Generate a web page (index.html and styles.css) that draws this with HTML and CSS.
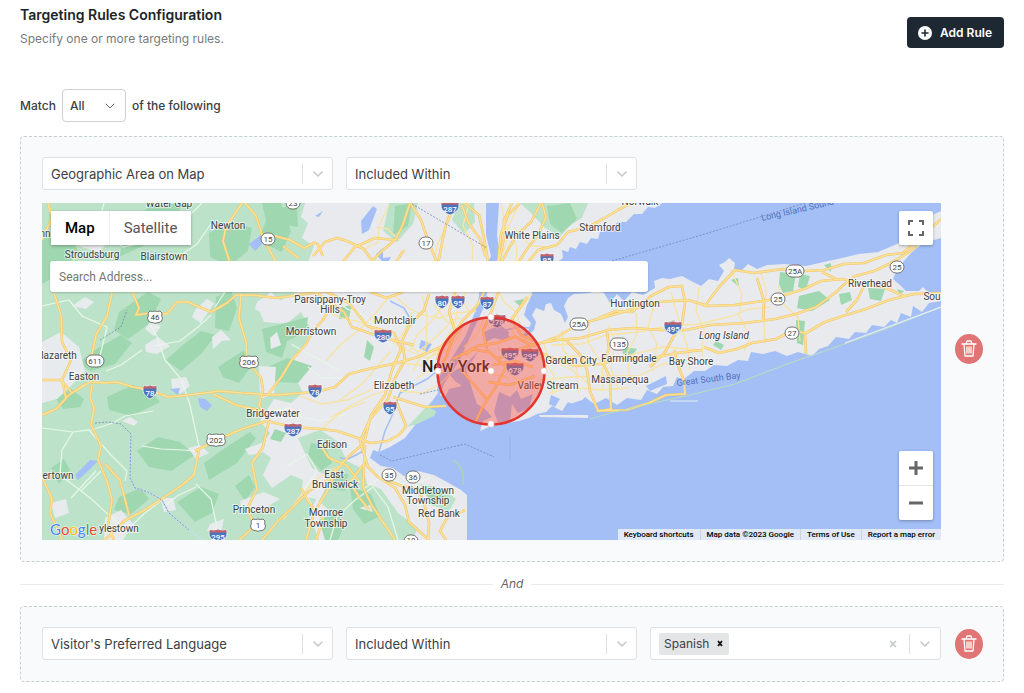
FILE: index.html
```
<!DOCTYPE html>
<html lang="en">
<head>
    <meta charset="UTF-8">
    <meta name="viewport" content="width=device-width, initial-scale=1.0">
    <title>Targeting Rules Configuration</title>
    <link rel="stylesheet" href="styles.css">
</head>
<body>

    <main class="page">
        <header class="header">
            <div>
                <h1>Targeting Rules Configuration</h1>
                <p class="subtitle">Specify one or more targeting rules.</p>
            </div>
            <button type="button" class="add-rule">
                <svg width="14" height="14" viewBox="0 0 14 14"><circle cx="7" cy="7" r="7" fill="#fff"/><path d="M7 4v6M4 7h6" stroke="#1e2832" stroke-width="1.6" stroke-linecap="round"/></svg>
                Add Rule
            </button>
        </header>

        <div class="match">
            <label for="matchType">Match</label>
            <div class="select select-small">
                <select id="matchType">
                    <option>All</option>
                    <option>Any</option>
                </select>
                <svg class="chevron" width="10" height="6" viewBox="0 0 10 6"><path d="M1 1l4 4 4-4"/></svg>
            </div>
            <span>of the following</span>
        </div>

        <!-- Rule 1: map area -->
        <section class="rule">
            <div class="rule-fields">
                <div class="select">
                    <select aria-label="Rule type">
                        <option>Geographic Area on Map</option>
                    </select>
                    <span class="arrow"><svg class="chevron" width="12" height="8" viewBox="0 0 12 8"><path d="M2 2l4 4 4-4"/></svg></span>
                </div>
                <div class="select">
                    <select aria-label="Condition">
                        <option>Included Within</option>
                    </select>
                    <span class="arrow"><svg class="chevron" width="12" height="8" viewBox="0 0 12 8"><path d="M2 2l4 4 4-4"/></svg></span>
                </div>

                <div class="map">
                    <svg class="map-canvas" viewBox="42 203 899 337" preserveAspectRatio="xMidYMid slice" role="img" aria-label="Map of New York and Long Island">
                        <defs>
                            <g id="interstate">
                                <path d="M-6-6q3 1 6-.5q3 1.500 6 .5c2.500 5 0 10-6 13c-6-3-8.500-8-6-13z" fill="#4c74bd" stroke="#fff" stroke-width=".7"/>
                                <path d="M-6-6q3 1 6-.5q3 1.500 6 .5l.8 2.600h-13.600z" fill="#c4616b"/>
                            </g>
                            <g id="interstate-wide">
                                <path d="M-8-6q4 1 8-.5q4 1.500 8 .5c2.500 5 0 10-8 13c-8-3-10.500-8-8-13z" fill="#4c74bd" stroke="#fff" stroke-width=".7"/>
                                <path d="M-8-6q4 1 8-.5q4 1.500 8 .5l.8 2.600h-17.600z" fill="#c4616b"/>
                            </g>
                            <rect id="route" x="-7" y="-6" width="14" height="12" rx="6" fill="#fff" stroke="#666" stroke-width=".9"/>
                            <rect id="route-wide" x="-9" y="-6" width="18" height="12" rx="6" fill="#fff" stroke="#666" stroke-width=".9"/>
                            <path id="us" d="M-5-6q2.500 1 5 0q2.500 1 5 0l2 2q-1 3 .5 5q0 4-3.500 4.500q-3 0-4 1q-1-1-4-1q-3.500-.5-3.500-4.500q1.500-2 .5-5z" fill="#fff" stroke="#666" stroke-width=".9"/>
                            <path id="us-wide" d="M-7-6q3.500 1 7 0q3.500 1 7 0l2 2q-1 3 .5 5q0 4-3.500 4.500q-5 0-6 1q-1-1-6-1q-3.500-.5-3.500-4.500q1.500-2 .5-5z" fill="#fff" stroke="#666" stroke-width=".9"/>

                            <path id="roads-west" d="M42 380L61 380L72 393L90 382L105 383L117 382L133 387L150 390L168 397L189 395L220 391L242 393L276 395L316 392L335 387L349 374L368 369L393 364L418 357L445 345L461 328
                                M54 293L61 315L62 342L71 360L62 380L66 398M92 385L90 398L94 408L91 425L101 446L98 460L107 481L112 500L108 526L114 540M132 291L139 308L136 315L151 313L167 314L177 302L188 302L211 312L227 303L236 295L253 295L276 298L305 294L329 291
                                M42 415L56 409L69 395L85 384M241 294L239 318L246 342L247 361L261 378L263 390L259 405L269 420L263 447L252 463L257 489L247 509L255 526L239 540M199 450L194 475L182 485L163 498L143 511L124 521L105 540M195 451L219 439L242 429L267 421L292 427L321 429L337 431L355 437L370 443L388 441
                                M42 477L52 499L50 513L62 540M105 464L120 480L129 515M112 293L107 316L96 335L91 359M213 394L236 405L262 411M242 203L226 227L223 241L230 263M245 203L256 216L263 238L276 262M42 240L52 218L48 203"/>
                            <path id="roads-jersey" d="M316 242L304 248L290 240L275 236M313 256L325 242L337 238L347 241L364 249L373 262M313 291L330 302L344 312L352 327L372 334L396 341L414 345M331 307L322 321L313 331L306 344L291 361L282 376L267 396M367 266L382 251L396 239L403 224L410 203M411 204L421 220L428 240L437 263M438 264L443 238L446 225L455 203
                                M327 292L349 303L367 326L394 333L401 349L392 370L385 395L371 415L364 443L348 457L329 479L309 491L292 508L279 520L262 540M429 294L424 310L409 326L402 341L405 360L395 378L388 399L370 419L360 441L368 467L378 477L395 488L405 505L409 522L429 540
                                M365 445L363 487L371 504L387 528L395 540M364 464L350 482L359 497L369 510M317 440L329 458L346 465L359 481M335 469L330 486L314 513L306 540M316 540L323 519L309 503L301 488M383 479L402 486L419 490L425 507L429 523L428 540M388 441L400 434L406 426L396 401M393 397L425 407L446 406
                                M323 256L317 243M340 265L355 247L375 238L395 240M298 258L283 246M455 292L449 312L455 331L441 347L437 360M370 292L387 298L403 292M396 262L404 250M465 510L447 518L440 531L446 540"/>
                            <path id="roads-city" d="M462 205L468 222L480 239L486 257M464 203L479 215L484 238L488 262M485 290L477 306L463 320L454 334L447 355L441 366M499 262L504 238L504 220L512 203M501 263L509 248L516 236L531 222L541 203M542 203L546 217L538 235L527 249L518 263M528 262L538 250L557 245L568 232L588 227L603 219L618 210L631 203
                                M520 203L508 215L501 234L498 262M499 290L492 310L483 331L487 350L506 367L495 388L482 408L476 421M527 297L512 319L521 335L534 341M492 365L515 361L533 367M488 382L510 385L535 376M465 355L477 346L497 343L514 337M487 352L472 349L453 359M488 401L472 382L462 371"/>
                            <path id="roads-island" d="M497 359L514 351L535 344L558 340L581 338L608 330L633 328L661 330L686 330L710 325L745 323L775 319L796 314L816 307L835 293L850 279M514 336L533 346L557 337L579 324L602 318L633 309L658 302L688 300L708 306L735 305L769 300L785 295L804 289L821 281L843 279L867 285L884 287L906 297
                                M599 318L616 311L632 312L651 296L669 287L682 286L685 303L682 324L675 334L665 352L650 367M704 307L719 287L735 270L754 273L783 269L805 271L824 270L844 264L864 263L886 255L903 253L914 243L925 234L941 219M822 272L836 279M852 277L874 271L889 264L906 254L917 246M846 312L857 300L864 286M757 278L764 301L763 321M704 347L719 353L737 349L752 343L776 339L792 331L806 333L825 322L846 315L866 309L889 300L914 294L941 293
                                M540 353L558 360L575 366L599 364L622 359L652 358L677 353L702 350M566 340L581 356L587 370L590 391L598 411L612 409M607 332L609 349L603 363L610 378L611 409M597 411L626 410L649 403L666 395L685 394L684 381L678 365L674 350M805 333L806 354"/>
                        </defs>

                        <!-- water -->
                        <rect x="42" y="203" width="899" height="337" fill="#a3bff5"/>

                        <!-- land -->
                        <g fill="#e8eaee">
                            <path d="M42 203H662L655 208L648 207L642 214L634 214L626 222L618 222L611 228L600 232L598 239L591 238L587 244L580 242L576 249L570 247L568 252L562 250L563 258L556 263L548 272L540 284L533 289L530 299L527 305L524 315L531 323L528 331L520 337L505 342L490 343L478 352L463 366L449 374L455 381L462 386L449 389L445 397L437 403L430 409L418 421L405 438L390 447L379 452L373 450L370 458L381 466L393 468L404 476L418 471L434 475L447 482L461 490L467 495L467 540H42z"/>
                            <path d="M466 370L478 352L496 338L514 330L526 337L534 330L536 322L532 315L536 308L544 311L546 304L551 303L554 310L561 314L565 323L568 317L564 306L568 298L574 294L590 293L599 288L604 293L610 303L617 294L624 301L632 292L643 295L655 288L654 281L662 278L670 279L682 276L693 282L701 286L709 279L718 281L724 271L719 265L725 262L729 258L735 263L734 269L741 271L748 264L757 269L767 265L785 264L806 266L824 262L842 258L859 254L878 252L890 247L906 240L920 230L930 216L941 211L941 238L931 241L921 245L912 252L904 261L897 270L893 279L900 285L906 291L919 291L923 287L929 293L941 293L941 301L929 303L922 312L913 306L911 317L901 313L897 323L891 320L884 327L872 325L866 333L855 332L849 339L836 337L828 346L819 349L812 356L798 352L787 356L775 351L763 354L751 352L748 361L738 360L727 366L714 365L705 371L694 371L684 379L677 377L673 386L663 387L657 394L647 390L641 400L627 398L617 405L606 398L594 404L585 397L577 406L568 402L562 411L552 406L546 412L537 414L529 418L519 421L507 423L491 426L480 431L483 421L492 417L485 409L477 404L473 392z"/>
                            <path d="M539 415L550 415L588 415L588 418L540 417z"/>
                        </g>

                        <!-- light green country -->
                        <g fill="#bce3c9">
                            <path d="M42 203H305L301 217L308 223L302 238L314 246L308 262L292 270L299 291L281 300L270 296L258 308L264 322L286 324L301 312L311 329L304 347L292 358L284 373L296 379L303 393L291 403L274 399L260 421L270 433L259 449L271 458L263 475L272 488L291 475L303 480L301 496L316 499L309 515L319 540H42z"/>
                            <path d="M298 438L320 430L337 441L347 461L363 469L367 484L381 489L398 513L418 528L412 540H327L336 517L319 501L331 478L312 468z"/>
                            <path d="M389 203H418L413 224L397 242L383 231zM520 203H588L582 218L569 226L560 237L545 228L532 214zM459 203L474 203L475 222L464 234L452 220z"/>
                            <path d="M407 427L431 402L445 393L434 416L417 424zM420 484L442 488L456 499L449 511L431 505z"/>
                        </g>

                        <!-- forests and parks -->
                        <g fill="#9fd7b0">
                            <path d="M42 239L57 228L69 235L78 251L62 273L42 284zM127 227L150 206L184 203L169 225L145 245L119 257zM209 233L231 221L252 228L248 251L229 266L210 257zM262 203L281 203L291 231L282 252L258 241L266 221zM282 208L297 203L298 227L286 225z"/>
                            <path d="M119 312L148 292L161 299L149 324L128 339L114 330zM98 348L121 335L132 343L115 364L91 371L78 363zM166 360L183 345L201 331L216 335L201 354L181 371zM216 297L231 290L237 308L229 331L215 328zM218 367L243 351L255 361L239 383L223 377z"/>
                            <path d="M56 399L71 389L84 399L80 407L63 409zM107 397L133 385L151 391L160 402L132 416L109 410zM137 451L158 437L180 442L195 455L171 471L149 467zM204 463L228 446L250 432L256 438L237 463L209 480zM177 502L201 487L219 494L212 513L195 522zM51 468L64 459L70 470L59 484zM119 497L141 488L149 499L131 514L114 510zM235 486L249 475L255 487L245 501z"/>
                            <path d="M262 329L285 323L308 317L306 332L287 341L282 358L266 352zM263 369L288 358L312 366L298 383L277 382zM395 206L412 203L408 226L393 235zM547 206L570 203L577 219L562 233L550 224zM367 340L374 347L370 361L364 357zM341 307L352 305L349 318L339 319z"/>
                            <path d="M311 443L325 445L332 463L321 471L308 455zM350 487L371 494L380 516L364 524L353 509zM319 520L337 511L344 526L338 540H325zM424 491L442 491L448 500L434 505zM335 475L348 474L345 491L332 489zM275 429L286 433L281 442L270 439z"/>
                            <path d="M780 272L796 274L793 291L783 293L779 284zM800 274L810 276L806 290L798 287zM799 296L819 291L830 300L812 311L797 308zM839 294L850 292L852 300L841 305zM868 288L885 289L881 301L870 299zM796 320L805 321L803 345L797 343zM824 265L831 263L831 272zM626 347L637 349L631 357L622 353zM664 323L675 320L673 334L666 330zM731 280L738 278L739 287zM716 341L724 345L721 350L713 345zM514 301L524 299L521 307zM897 289L904 291L900 295z"/>
                        </g>

                        <!-- towns over the green -->
                        <g fill="#e7ebee">
                            <path d="M42 342L61 332L79 347L85 371L71 386L57 399L42 403zM70 228L91 226L112 238L99 252L78 246zM85 297L94 302L86 309L72 306zM150 322L161 326L154 336L145 329zM145 345L158 337L170 346L157 354L146 352zM195 310L207 299L214 303L201 323L192 317zM212 337L221 330L231 340L222 341L213 349zM257 302L271 292L279 300L264 314L255 309z"/>
                            <path d="M122 421L130 417L138 422L134 426zM171 379L186 377L190 386L180 394L172 388zM188 448L200 445L209 453L196 459zM160 498L173 498L176 510L164 512zM51 503L66 499L69 513L55 518zM105 518L121 510L133 524L123 540H104zM210 524L224 519L221 532L207 531zM259 366L276 367L274 394L260 399zM245 449L264 442L262 453L249 455zM240 501L264 492L280 499L260 511L241 508z"/>
                            <path d="M270 338L277 332L281 345L271 349zM286 275L300 270L298 284L287 287zM359 508L370 505L373 512zM307 484L316 482L319 492L309 497z"/>
                        </g>

                        <!-- rivers and lakes -->
                        <g fill="#a3bff5">
                            <path d="M486 203H499L497 235L500 258L490 282L483 309L471 335L459 361L444 384L440 395L454 404L464 415L440 413L428 407L438 393L437 380L452 358L466 335L478 304L481 278L491 256L486 235z"/>
                            <path d="M361 221L373 206L377 209L369 230L362 234zM315 216L323 211L319 217zM249 244L261 235L265 241L255 251zM198 398L205 399L212 405L207 411L200 407zM75 475L90 460L98 461L89 470L78 480zM170 389L180 388L178 395zM376 254L383 248L383 258L391 257L386 266zM421 340L432 344L427 352L419 348zM484 332L500 325L509 332L507 341L494 338L486 342zM598 286L616 288L613 294L600 292zM551 395L560 399L555 407L549 404zM567 405L582 400L581 409L568 411zM646 386L666 376L667 384L650 391z"/>
                            <path d="M494 412L499 392L510 397L517 390L521 399L533 394L529 408L518 413L512 404L510 421L498 422z"/>
                        </g>
                        <g fill="none" stroke="#a3bff5" stroke-width="1.5">
                            <path d="M340 458L348 459L356 455L365 450M447 363L427 379L400 393L391 418L385 431L379 452M509 338L506 330L519 327L530 328M390 301L404 308L411 320"/>
                            <path d="M131 434L130 478L135 488L148 492L162 500L169 513L189 530L203 540" stroke="#c5ddee"/>
                        </g>

                        <!-- small roads -->
                        <g fill="none" stroke="#e8f7e9" stroke-width="1.2">
                            <path d="M42 306L69 300L82 316L107 327L99 360M104 203L98 225L123 247L161 239L176 230L187 218L202 203M174 260L197 244L211 224M42 428L73 432L89 430L110 454L127 471L125 481M73 432L62 450L60 475L89 497L120 525M91 430L113 423L125 416L153 411M142 446L161 449L182 450L200 451L190 405L181 379L165 360L157 337L151 326L160 328M154 346L180 341L198 327L211 315M142 350L121 365L106 371M71 498L96 471M60 475L81 491L101 471M162 500L145 513L129 528M196 484L211 499L217 527L215 540M166 505L177 496L196 487M211 265L227 289L215 307"/>
                            <path d="M330 540L337 517L355 500L373 487L388 507L398 540M365 488L384 475L408 487L431 477M287 466L307 454L317 471L304 490L313 507M270 411L291 408L302 417L320 421L347 414M308 367L322 378L345 378L360 368M329 293L347 309L366 316L378 330L391 347M291 344L307 353L328 364L340 371M337 273L351 291L365 294"/>
                        </g>

                        <!-- streets in the suburbs -->
                        <g fill="none" stroke="#f9e3a2" stroke-width="1.3">
                            <path d="M316 297L328 312L342 318L360 322L380 335M326 361L341 344L359 330L375 314L390 295M395 296L407 307L422 315L439 318L455 313L476 311M422 295L427 316L426 346L413 371M447 293L442 307L431 322L418 334L410 350M393 342L409 351L427 358L449 349L461 333M392 362L410 364L432 367L453 361M455 291L459 304L454 326L441 347L424 363M400 391L423 393L440 384L453 371"/>
                            <path d="M469 203L463 226L473 246L472 264M499 292L505 303L516 312L521 327M501 203L506 228L517 247L516 263M520 203L509 225L505 247L498 264M514 228L531 246L552 247M532 294L514 317L513 334M449 210L445 228L437 246L434 263M389 205L379 226L378 242L363 250M400 241L388 229L377 227"/>
                            <path d="M526 349L542 359L554 375L552 395M543 342L549 360L571 369L590 385M562 330L563 350L577 368L578 393M590 320L588 342L602 364L603 390M608 325L615 341L611 368L618 389M636 313L637 334L627 353L630 378M654 305L648 326L657 344L653 371M671 292L678 317L687 346L690 370M699 287L696 311L704 329L702 356M731 270L742 294L739 315L750 338L744 351M760 270L766 289L764 321L765 343M778 285L784 305L798 317L800 341M540 380L571 377L606 376L638 376L661 365L685 359M548 394L570 387L601 390L629 388M543 359L574 356L599 359L626 356L663 347L701 350M552 345L581 344L606 335L638 332L668 326L700 324L732 316L749 309L770 307"/>
                            <path d="M340 400L362 384L378 366L391 351M330 418L352 405L372 395L395 388M321 429L343 411L365 402M300 396L322 404L347 400L371 390M283 520L300 496L318 478L338 466M408 344L418 352L436 337L451 322M417 378L431 369L443 372M412 312L405 330L396 343M434 305L447 322L460 318M470 312L462 300L466 291M464 347L478 333L484 318M498 346L503 356L521 356M507 372L522 383L540 388M478 370L496 375L509 378"/>
                        </g>

                        <!-- main roads, darker edge first and the yellow on top -->
                        <g class="road-edge">
                            <use href="#roads-west"/>
                            <use href="#roads-jersey"/>
                            <use href="#roads-city"/>
                            <use href="#roads-island"/>
                        </g>
                        <g class="road-fill">
                            <use href="#roads-west"/>
                            <use href="#roads-jersey"/>
                            <use href="#roads-city"/>
                            <use href="#roads-island"/>
                        </g>

                        <!-- barrier beach and ferry lines -->
                        <path d="M590 419L610 413L649 404L690 395L735 384L790 363L836 347L878 332L941 307" fill="none" stroke="#b9dbc4" stroke-width="1.2"/>
                        <path d="M670 401L698 401M845 343L941 307" fill="none" stroke="#e8edf3" stroke-width="1.2"/>
                        <path d="M453 460Q465 467 463 485" fill="none" stroke="#a7d5bb" stroke-width="1.6"/>
                        <g fill="none" stroke="#7185b8" stroke-width=".8" stroke-dasharray="2 1.500">
                            <path d="M380 455L392 461L465 444L494 457M412 204L487 248M612 261L705 234L805 203M420 394L438 390M100 340L121 327L127 310M95 423L108 422L121 424L131 434L130 478L135 488L148 492L162 500L169 513L189 530"/>
                        </g>
                        <path d="M510 437V461" stroke="#93afe5" stroke-width=".8"/>

                        <!-- place names -->
                        <g class="places">
                            <text x="169" y="207">Water Gap</text>
                            <text x="228" y="229">Newton</text>
                            <text x="45" y="237">nn</text>
                            <text x="92" y="258">Stroudsburg</text>
                            <text x="164" y="260">Blairstown</text>
                            <text x="330" y="303">Parsippany-Troy</text>
                            <text x="330" y="313">Hills</text>
                            <text x="311" y="335">Morristown</text>
                            <text x="395" y="324">Montclair</text>
                            <text x="394" y="389">Elizabeth</text>
                            <text x="273" y="417">Bridgewater</text>
                            <text x="332" y="448">Edison</text>
                            <text x="334" y="478">East</text>
                            <text x="335" y="488">Brunswick</text>
                            <text x="254" y="513">Princeton</text>
                            <text x="326" y="516">Monroe</text>
                            <text x="326" y="527">Township</text>
                            <text x="428" y="494">Middletown</text>
                            <text x="428" y="504">Township</text>
                            <text x="439" y="517">Red Bank</text>
                            <text x="84" y="380">Easton</text>
                            <text x="59" y="359">lazareth</text>
                            <text x="58" y="479">ertown</text>
                            <text x="119" y="532">ylestown</text>
                            <text x="532" y="239">White Plains</text>
                            <text x="600" y="231">Stamford</text>
                            <text x="640" y="205">Norwalk</text>
                            <text x="635" y="307">Huntington</text>
                            <text x="571" y="364">Garden City</text>
                            <text x="629" y="362">Farmingdale</text>
                            <text x="691" y="365">Bay Shore</text>
                            <text x="620" y="383">Massapequa</text>
                            <text x="548" y="389">Valley Stream</text>
                            <text x="870" y="287">Riverhead</text>
                            <text x="932" y="300">Sou</text>
                            <text x="724" y="339" class="region">Long Island</text>
                            <text x="456" y="372" class="city">New York</text>
                        </g>
                        <g class="water-names">
                            <text x="762" y="221" transform="rotate(-13 762 221)">Long Island Sound</text>
                            <text x="677" y="386" transform="rotate(-7 677 386)">Great South Bay</text>
                        </g>

                        <!-- road numbers -->
                        <g class="interstates">
                            <use href="#interstate-wide" x="450" y="208"/><text x="450" y="212">287</text>
                            <use href="#interstate" x="442" y="302"/><text x="442" y="306">80</text>
                            <use href="#interstate" x="458" y="302"/><text x="458" y="306">95</text>
                            <use href="#interstate" x="487" y="303"/><text x="487" y="307">87</text>
                            <use href="#interstate" x="547" y="260"/><text x="547" y="263">95</text>
                            <use href="#interstate-wide" x="383" y="336"/><text x="383" y="340">280</text>
                            <use href="#interstate-wide" x="497" y="321"/><text x="497" y="325">278</text>
                            <use href="#interstate-wide" x="510" y="354"/><text x="510" y="358">495</text>
                            <use href="#interstate-wide" x="530" y="355"/><text x="530" y="359">295</text>
                            <use href="#interstate-wide" x="515" y="369"/><text x="515" y="373">678</text>
                            <use href="#interstate-wide" x="673" y="328"/><text x="673" y="332">495</text>
                            <use href="#interstate" x="150" y="392"/><text x="150" y="396">78</text>
                            <use href="#interstate" x="315" y="391"/><text x="315" y="395">78</text>
                            <use href="#interstate" x="390" y="408"/><text x="390" y="412">95</text>
                            <use href="#interstate-wide" x="293" y="430"/><text x="293" y="434">287</text>
                            <use href="#interstate-wide" x="218" y="536"/><text x="218" y="540">295</text>
                        </g>
                        <g class="routes">
                            <use href="#route" x="293" y="203"/><text x="293" y="206">23</text>
                            <use href="#route" x="268" y="239"/><text x="268" y="242">15</text>
                            <use href="#route" x="426" y="243"/><text x="426" y="246">17</text>
                            <use href="#us" x="155" y="317"/><text x="155" y="320">46</text>
                            <use href="#us-wide" x="249" y="362"/><text x="249" y="365">206</text>
                            <use href="#route-wide" x="95" y="361"/><text x="95" y="364">611</text>
                            <use href="#us-wide" x="216" y="440"/><text x="216" y="443">202</text>
                            <use href="#us" x="258" y="525"/><text x="258" y="528">1</text>
                            <use href="#route" x="389" y="475"/><text x="389" y="478">35</text>
                            <use href="#route" x="413" y="477"/><text x="413" y="480">36</text>
                            <use href="#route" x="411" y="541"/><text x="411" y="543">18</text>
                            <use href="#route-wide" x="579" y="324"/><text x="579" y="327">25A</text>
                            <use href="#route-wide" x="619" y="344"/><text x="619" y="347">135</text>
                            <use href="#route-wide" x="795" y="271"/><text x="795" y="274">25A</text>
                            <use href="#route" x="778" y="299"/><text x="778" y="302">25</text>
                            <use href="#route" x="897" y="267"/><text x="897" y="270">25</text>
                            <use href="#route" x="792" y="333"/><text x="792" y="336">27</text>
                        </g>

                        <!-- selected area -->
                        <circle cx="491" cy="371" r="53.500" fill="#ff4a3a" fill-opacity=".4" stroke="#e3342d" stroke-width="2.500"/>
                        <g fill="#fff" stroke="#d9a5a5" stroke-width=".5">
                            <circle cx="491" cy="317" r="3.200"/>
                            <circle cx="544" cy="371" r="3.200"/>
                            <circle cx="491" cy="424" r="3.200"/>
                            <circle cx="438" cy="371" r="3.200"/>
                            <circle cx="491" cy="371" r="3.200"/>
                        </g>
                    </svg>

                    <div class="map-type">
                        <button type="button" class="active">Map</button>
                        <button type="button">Satellite</button>
                    </div>
                    <input type="text" class="map-search" placeholder="Search Address..." aria-label="Search Address">
                    <button type="button" class="map-full" aria-label="Toggle fullscreen">
                        <svg width="16" height="16" viewBox="0 0 16 16" fill="none" stroke="#666" stroke-width="2"><path d="M1 5V1h4M11 1h4v4M15 11v4h-4M5 15H1v-4"/></svg>
                    </button>
                    <div class="map-zoom">
                        <button type="button" aria-label="Zoom in"><svg width="16" height="16" viewBox="0 0 16 16" stroke="#666" stroke-width="3"><path d="M8 1v14M1 8h14"/></svg></button>
                        <button type="button" aria-label="Zoom out"><svg width="16" height="16" viewBox="0 0 16 16" stroke="#666" stroke-width="3"><path d="M1 8h14"/></svg></button>
                    </div>
                    <a href="#" class="map-logo" aria-label="Google"><span class="blue">G</span><span class="red">o</span><span class="yellow">o</span><span class="blue">g</span><span class="green">l</span><span class="red">e</span></a>
                    <div class="map-footer">
                        <a href="#">Keyboard shortcuts</a>
                        <span>Map data ©2023 Google</span>
                        <a href="#">Terms of Use</a>
                        <a href="#">Report a map error</a>
                    </div>
                </div>
            </div>
            <button type="button" class="delete" aria-label="Delete rule">
                <svg width="16" height="18" viewBox="0 0 16 18"><path d="M1 4h14M5 4l1-3h4l1 3M3 4l1 12h8l1-12M6 7v6M10 7v6M8 7v6"/></svg>
            </button>
        </section>

        <div class="divider"><span>And</span></div>

        <!-- Rule 2: language -->
        <section class="rule">
            <div class="rule-fields">
                <div class="select">
                    <select aria-label="Rule type">
                        <option>Visitor's Preferred Language</option>
                    </select>
                    <span class="arrow"><svg class="chevron" width="12" height="8" viewBox="0 0 12 8"><path d="M2 2l4 4 4-4"/></svg></span>
                </div>
                <div class="select">
                    <select aria-label="Condition">
                        <option>Included Within</option>
                    </select>
                    <span class="arrow"><svg class="chevron" width="12" height="8" viewBox="0 0 12 8"><path d="M2 2l4 4 4-4"/></svg></span>
                </div>
                <div class="multi">
                    <span class="tag">Spanish <button type="button" aria-label="Remove Spanish"><svg width="6" height="7" viewBox="0 0 6 7"><path d="M1 1l4 5M5 1l-4 5" stroke="#111" stroke-width="1.800"/></svg></button></span>
                    <input type="text" aria-label="Languages">
                    <button type="button" class="clear" aria-label="Clear all"><svg width="8" height="8" viewBox="0 0 8 8"><path d="M1 1l6 6M7 1l-6 6" stroke="#c4c6c8" stroke-width="1.500"/></svg></button>
                    <span class="arrow"><svg class="chevron" width="12" height="8" viewBox="0 0 12 8"><path d="M2 2l4 4 4-4"/></svg></span>
                </div>
            </div>
            <button type="button" class="delete" aria-label="Delete rule">
                <svg width="16" height="18" viewBox="0 0 16 18"><path d="M1 4h14M5 4l1-3h4l1 3M3 4l1 12h8l1-12M6 7v6M10 7v6M8 7v6"/></svg>
            </button>
        </section>
    </main>

</body>
</html>
```
FILE: styles.css
```
* {
    box-sizing: border-box;
}

body {
    font-family: Inter, "Liberation Sans", sans-serif;
    margin: 0;
    color: #3c4043;
    background-color: #fff;
}

button, input, select {
    font-family: inherit;
    margin: 0;
}

button {
    border: none;
    padding: 0;
    background: none;
    cursor: pointer;
}

.page {
    padding: 5px 20px 12px;
}

.header {
    display: flex;
    justify-content: space-between;
    align-items: flex-end;
}

h1 {
    margin: 0;
    font-size: 14px;
    line-height: 20px;
    font-weight: 600;
    color: #202428;
}

.subtitle {
    margin: 5px 0 0;
    font-size: 12px;
    line-height: 18px;
    color: #777b80;
}

.add-rule {
    display: flex;
    align-items: center;
    gap: 8px;
    height: 31px;
    padding: 0 12px 0 11px;
    border-radius: 4px;
    background-color: #1e2832;
    color: #fff;
    font-size: 12px;
    font-weight: 600;
}

.match {
    display: flex;
    align-items: center;
    gap: 6px;
    margin: 41px 0 14px;
    font-size: 12px;
    font-weight: 500;
}

/* selects */
.select {
    display: grid;
    align-items: center;
}

.select > * {
    grid-area: 1 / 1;
}

.select select {
    appearance: none;
    width: 100%;
    height: 33px;
    padding: 0 45px 0 8px;
    border: 1px solid #dde1e4;
    border-radius: 3px;
    background-color: #fff;
    color: #3c4043;
    font-size: 13px;
}

.select-small {
    width: 64px;
}

.select-small select {
    padding: 0 20px 0 7px;
    border-color: #cdd0d3;
    border-radius: 4px;
    font-size: 12px;
    font-weight: 500;
}

.chevron {
    fill: none;
    stroke: #c4c6c8;
    stroke-width: 1.5;
    stroke-linecap: round;
}

.select-small .chevron {
    justify-self: end;
    margin-right: 11px;
    stroke: #666;
    stroke-width: 1;
    pointer-events: none;
}

.arrow {
    display: flex;
    align-items: center;
    justify-content: center;
    justify-self: end;
    width: 31px;
    height: 20px;
    border-left: 1px solid #dde1e4;
    pointer-events: none;
}

/* rules */
.rule {
    display: flex;
    align-items: center;
    gap: 14px;
    padding: 20px 20px 21px 21px;
    border: 1px dashed #c5d0cd;
    border-radius: 4px;
    background-color: #f9fafb;
}

.rule-fields {
    flex: 1;
    display: grid;
    grid-template-columns: repeat(3, minmax(0, 1fr));
    gap: 13px;
}

.delete {
    display: flex;
    align-items: center;
    justify-content: center;
    width: 28px;
    height: 30px;
    border-radius: 50%;
    background-color: #e17475;
}

.delete svg {
    fill: none;
    stroke: #fff;
    stroke-width: 1.3;
    stroke-linejoin: round;
    stroke-linecap: round;
}

.divider {
    display: flex;
    align-items: center;
    gap: 8px;
    margin: 14px 0;
    font-size: 12px;
    line-height: 16px;
    font-style: italic;
    color: #666;
}

.divider::before,
.divider::after {
    content: "";
    flex: 1;
    border-top: 1px solid #e8eaec;
}

.multi {
    display: flex;
    align-items: center;
    height: 33px;
    padding-left: 8px;
    border: 1px solid #dde1e4;
    border-radius: 3px;
    background-color: #fff;
}

.multi input {
    flex: 1;
    min-width: 0;
    border: none;
    outline: none;
}

.multi .clear {
    display: flex;
    padding: 0 12px;
}

.tag {
    display: flex;
    align-items: center;
    gap: 8px;
    height: 22px;
    padding: 0 6px 0 5px;
    background-color: #e4e5e6;
    border-radius: 2px;
    font-size: 12px;
}

.tag button {
    display: flex;
}

/* map */
.map {
    grid-column: 1 / -1;
    position: relative;
    overflow: hidden;
    font-family: Roboto, sans-serif;
}

.map-canvas {
    display: block;
    width: 100%;
}

.road-edge,
.road-fill {
    fill: none;
    stroke-linejoin: round;
}

.road-edge {
    stroke: #efc46f;
    stroke-width: 2.6;
}

.road-fill {
    stroke: #fde293;
    stroke-width: 1.5;
}

.places text {
    font-size: 10px;
    fill: #3c4043;
    text-anchor: middle;
    stroke: #fff;
    stroke-width: 2px;
    stroke-opacity: 0.6;
    paint-order: stroke;
}

.places .city {
    font-size: 16px;
    font-weight: 500;
    fill: #202124;
}

.places .region {
    font-style: italic;
}

.water-names text {
    font-size: 9px;
    fill: #5272bd;
}

.interstates text {
    font-size: 8px;
    font-weight: 500;
    fill: #fff;
    text-anchor: middle;
}

.routes text {
    font-size: 8px;
    fill: #444;
    text-anchor: middle;
}

.map-type {
    position: absolute;
    top: 8px;
    left: 9px;
    display: flex;
    background-color: #fff;
    box-shadow: 0 1px 3px rgba(0, 0, 0, 0.3);
}

.map-type button {
    height: 34px;
    padding: 0 14px;
    font-size: 15px;
    color: #565656;
}

.map-type .active {
    font-weight: 500;
    color: #000;
    border-right: 1px solid #eee;
}

.map-search {
    position: absolute;
    top: 58px;
    left: 8px;
    width: 598px;
    max-width: 80%;
    height: 31px;
    padding: 0 9px;
    border: none;
    border-radius: 3px;
    background-color: #fff;
    box-shadow: 0 1px 2px rgba(0, 0, 0, 0.2);
    font-size: 12px;
}

.map-search::placeholder {
    color: #757575;
}

.map-full,
.map-zoom {
    position: absolute;
    right: 8px;
    width: 34px;
    border-radius: 2px;
    background-color: #fff;
    box-shadow: 0 1px 3px rgba(0, 0, 0, 0.3);
}

.map-full {
    display: flex;
    align-items: center;
    justify-content: center;
    top: 8px;
    height: 34px;
}

.map-zoom {
    bottom: 20px;
}

.map-zoom button {
    display: flex;
    align-items: center;
    justify-content: center;
    width: 100%;
    height: 34px;
}

.map-zoom button + button {
    height: 35px;
    border-top: 1px solid #e6e6e6;
}

.map-logo {
    position: absolute;
    left: 8px;
    bottom: 1px;
    font-family: Lato, sans-serif;
    font-size: 15px;
    line-height: 20px;
    text-decoration: none;
    -webkit-text-stroke: 1px rgba(255, 255, 255, 0.9);
    paint-order: stroke fill;
}

.blue { color: #4285f4; }
.red { color: #ea4335; }
.yellow { color: #fbbc05; }
.green { color: #34a853; }

.map-footer {
    position: absolute;
    right: 0;
    bottom: 0;
    display: flex;
    font-size: 8px;
    line-height: 11px;
    font-weight: 500;
    background-color: rgba(245, 245, 245, 0.75);
}

.map-footer a,
.map-footer span {
    padding: 0 6px;
    color: #000;
    text-decoration: none;
}

.map-footer > * + * {
    border-left: 1px solid #cdd3dd;
}
```
